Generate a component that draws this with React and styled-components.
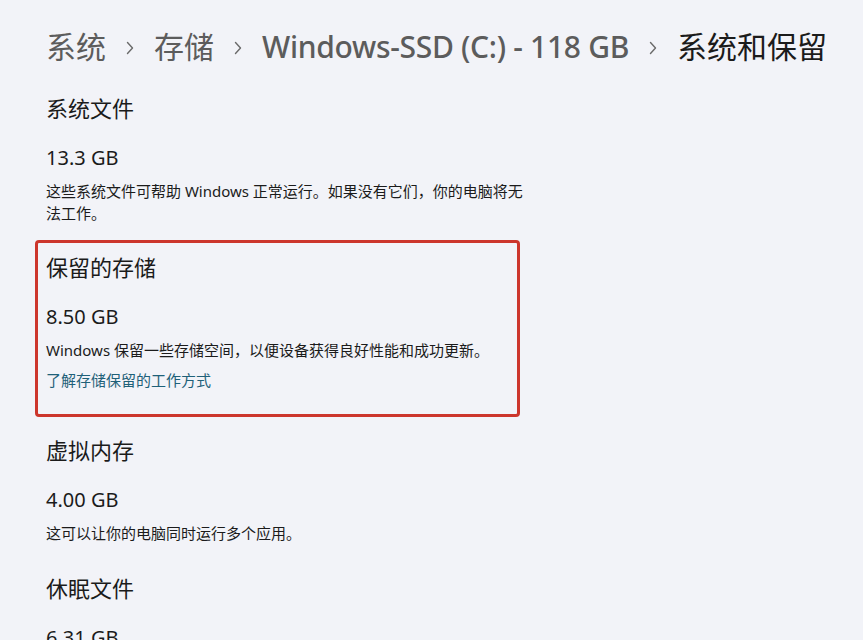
import React from "react";
import styled, { createGlobalStyle } from "styled-components";

const GlobalStyle = createGlobalStyle`
  html, body {
    margin: 0;
    background: #f2f3f8;
  }
  body {
    font-family: "Noto Sans", "Noto Sans CJK SC", sans-serif;
    color: #1b1b1b;
  }
`;

const Page = styled.div`
  width: 863px;
  height: 640px;
  overflow: hidden;
  padding: 27px 0 0 46px;
  box-sizing: border-box;
`;

const Breadcrumb = styled.nav`
  display: flex;
  align-items: center;
  gap: 20px;
  height: 40px;
  font-size: 30px;
  line-height: 40px;
  white-space: nowrap;
`;

const Crumb = styled.span`
  color: ${props => (props.current ? "#1b1b1b" : "#5c5c5c")};
  font-weight: ${props => (props.latin ? 500 : 400)};
  letter-spacing: ${props => (props.latin ? "-0.3px" : "0")};
`;

const Chevron = styled.svg`
  width: 8px;
  height: 14px;
  flex-shrink: 0;
  margin-top: 2px;
`;

const Sections = styled.div`
  display: flex;
  flex-direction: column;
  margin-top: 26px;
`;

const Section = styled.section`
  margin-bottom: ${props => props.gap || 29}px;
`;

const Highlight = styled.section`
  width: 471px;
  margin: 0 0 18px -11px;
  padding: 9px 0 23px 8px;
  border: 3px solid #cc362c;
  border-radius: 4px;
`;

const Heading = styled.h2`
  margin: 0;
  font-size: 22px;
  font-weight: 400;
  line-height: 30px;
`;

const Size = styled.div`
  margin-top: 21px;
  font-size: 20px;
  line-height: 28px;
`;

const Description = styled.p`
  margin: 8px 0 0;
  max-width: 490px;
  font-size: 15px;
  line-height: 22px;
`;

const Link = styled.a`
  display: block;
  margin-top: 8px;
  font-size: 15px;
  line-height: 22px;
  color: #1f6179;
  text-decoration: none;
`;

function Arrow() {
  return (
    <Chevron viewBox="0 0 8 14">
      <path d="M1.5 1.5 L6.5 7 L1.5 12.5" fill="none" stroke="#6a6a6a" strokeWidth="1.4" strokeLinecap="round" strokeLinejoin="round" />
    </Chevron>
  );
}

const items = [
  {
    title: "系统文件",
    size: "13.3 GB",
    text: "这些系统文件可帮助 Windows 正常运行。如果没有它们，你的电脑将无法工作。",
    gap: 16,
  },
  {
    title: "保留的存储",
    size: "8.50 GB",
    text: "Windows 保留一些存储空间，以便设备获得良好性能和成功更新。",
    link: "了解存储保留的工作方式",
    highlight: true,
  },
  {
    title: "虚拟内存",
    size: "4.00 GB",
    text: "这可以让你的电脑同时运行多个应用。",
  },
  {
    title: "休眠文件",
    size: "6.31 GB",
    text: "",
  },
];

export default function App() {
  return (
    <>
      <GlobalStyle />
      <Page>
        <Breadcrumb>
          <Crumb>系统</Crumb>
          <Arrow />
          <Crumb>存储</Crumb>
          <Arrow />
          <Crumb latin>Windows-SSD (C:) - 118 GB</Crumb>
          <Arrow />
          <Crumb current>系统和保留</Crumb>
        </Breadcrumb>
        <Sections>
          {items.map(item => {
            const body = (
              <>
                <Heading>{item.title}</Heading>
                <Size>{item.size}</Size>
                {item.text && <Description>{item.text}</Description>}
                {item.link && <Link href="#">{item.link}</Link>}
              </>
            );
            return item.highlight ? (
              <Highlight key={item.title}>{body}</Highlight>
            ) : (
              <Section key={item.title} gap={item.gap}>
                {body}
              </Section>
            );
          })}
        </Sections>
      </Page>
    </>
  );
}
